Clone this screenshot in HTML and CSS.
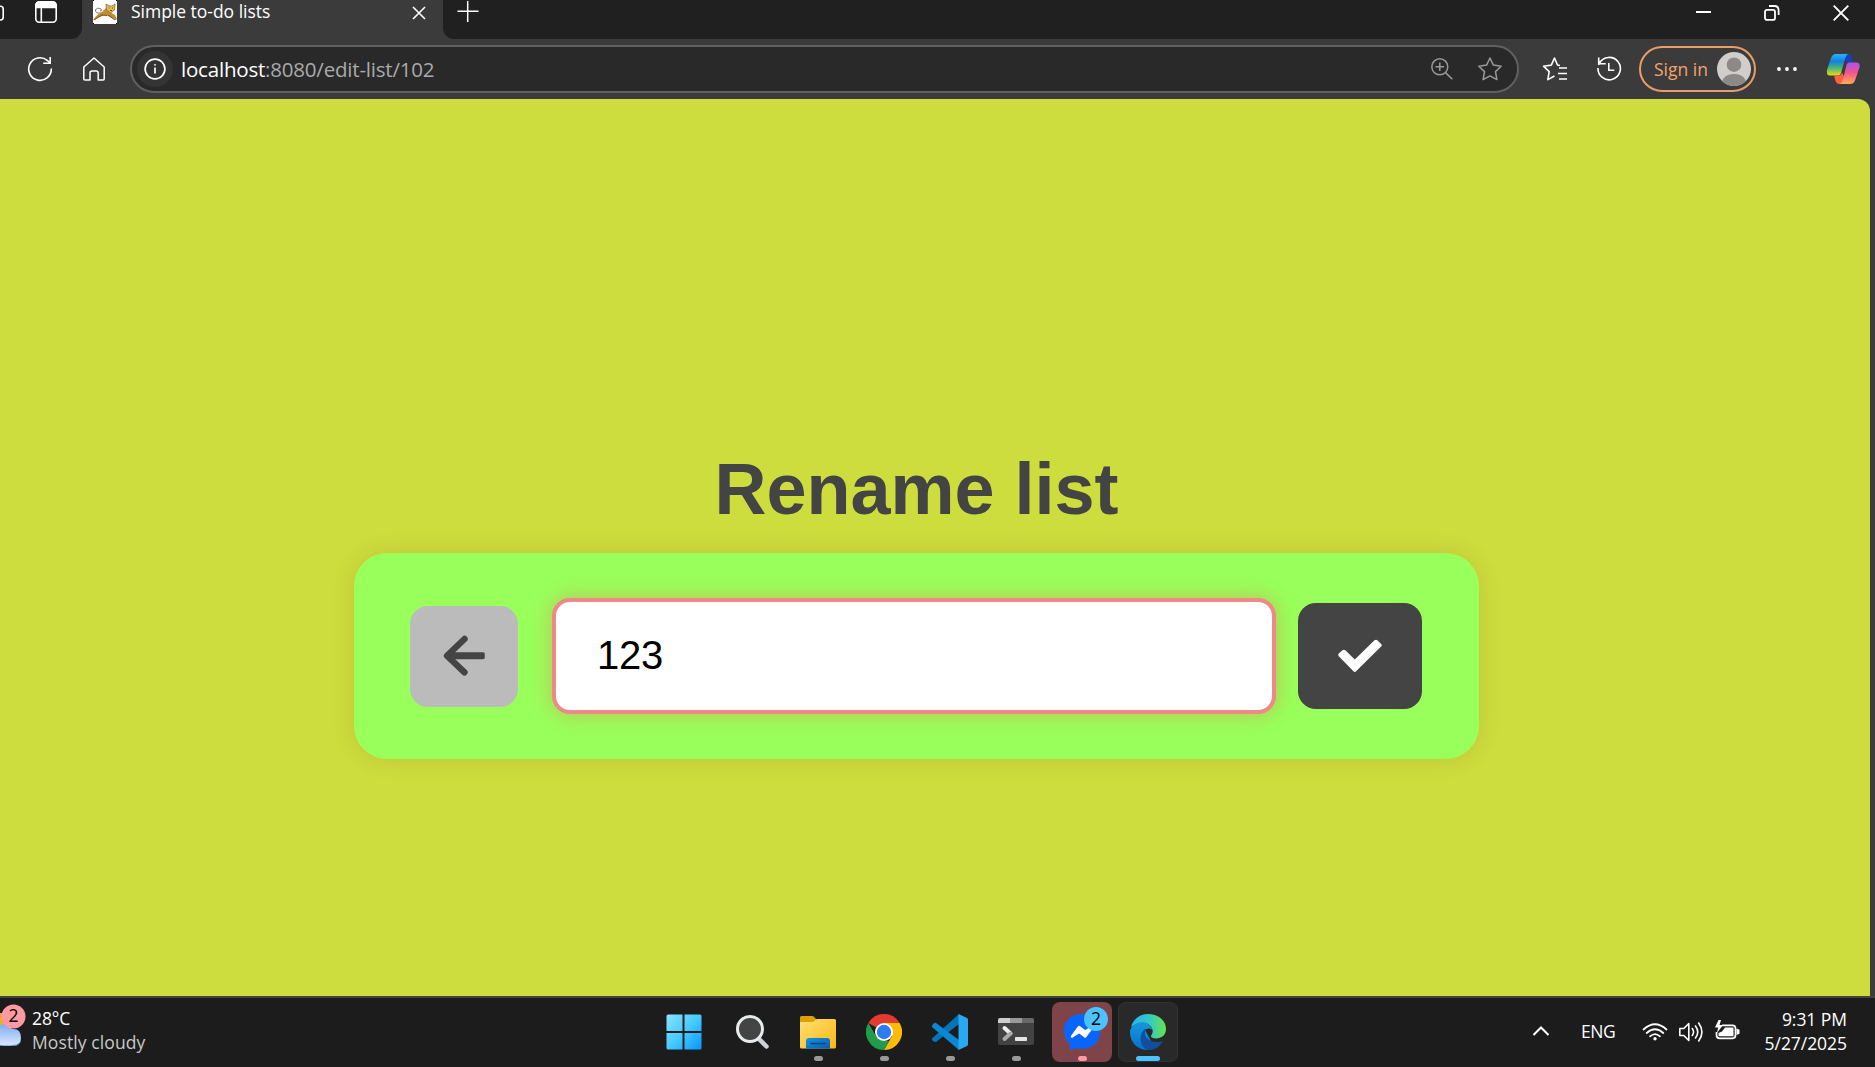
FILE: index.html
```html
<!DOCTYPE html>
<html lang="en">
<head>
<meta charset="utf-8">
<title>Simple to-do lists</title>
<link rel="stylesheet" href="styles.css">
</head>
<body>
<div class="screen">
  <header class="tabbar">
    <div class="tab-tools">
      <svg width="60" height="26" viewBox="0 0 60 26" fill="none" stroke="#fff" stroke-width="1.6"><path d="M0 6.3h.5q2.7 0 2.7 2.7v8q0 3-2.7 3H0"/><rect x="35.8" y="1.8" width="20.4" height="20.4" rx="3.5"/><path d="M41.3 8v14"/><path d="M36.5 3.5Q37.5 2 39.5 2h13q3 0 3.5 3v2.5H36z" fill="#fff"/></svg>
    </div>
    <div class="tab">
      <svg class="favicon" width="24" height="24" viewBox="0 0 24 24"><path fill="#fff" d="M0 0h24v24H0z"/><path d="M9 13Q2 14 2.500 10Q4 7 8 9Q10 11 7 11" fill="none" stroke="#777" stroke-width="1"/><path d="M0 20q4-6 9-8l4-4 4 4 5 3 2 4-1 1-5-3-6-2-6 2-5 3z" fill="#c98c2c"/><path d="M13 4l3 2h3l3-2-.5 6-4 3-4-3z" fill="#e5bd55" stroke="#8c6425" stroke-width=".8"/><path d="M15.500 8h1M19 8h1M17 10.500h2M1 20l8-5 5 .5M15 15l7 5" stroke="#544030" stroke-width=".9" fill="none"/><path d="M0 0h1v1H0zM23 0h1v1h-1zM0 23h1v1H0zM23 23h1v1h-1z"/></svg>
      <span class="tab-title">Simple to-do lists</span>
      <svg class="tab-close" width="14" height="14" viewBox="0 0 14 14" fill="none" stroke="#fff" stroke-width="1.6"><path d="M1 1l12 12M13 1L1 13"/></svg>
    </div>
    <div class="tab-rest">
      <svg width="22" height="22" viewBox="0 0 22 22" fill="none" stroke="#fff" stroke-width="1.5"><path d="M.5 11.300h21M10.700 1v21"/></svg>
      <div class="window-buttons">
        <svg width="15" height="15" viewBox="0 0 15 15"><path d="M0 6h15v2H0z" fill="#fff"/></svg>
        <svg width="16" height="16" viewBox="0 0 16 16" fill="none" stroke="#fff" stroke-width="1.8"><rect x="1" y="4.900" width="10" height="10" rx="2"/><path d="M5 1h5.500Q14.600 1 14.600 5.500V10"/></svg>
        <svg width="16" height="16" viewBox="0 0 16 16" fill="none" stroke="#fff" stroke-width="1.9"><path d="M.7.7l14.600 14.600M15.300.7L.7 15.300"/></svg>
      </div>
    </div>
  </header>
  <nav class="toolbar">
    <svg class="refresh" width="26" height="26" viewBox="0 0 26 26" fill="none" stroke="#fff" stroke-width="1.6"><path d="M24.300 12.500A11.300 11.300 0 1 1 20.200 4.300L23 6.700M23.200 1v6.300h-7"/></svg>
    <svg class="home" width="24" height="26" viewBox="0 0 24 26" fill="none" stroke="#fff" stroke-width="1.500" stroke-linejoin="round"><path d="M1.800 11L12 2l10.200 9v12q0 1-1 1h-5v-7q0-2-2-2H10q-2 0-2 2v7H3q-1.200 0-1.200-1z"/></svg>
    <div class="address">
      <span class="site-info"><svg width="22" height="22" viewBox="0 0 22 22" fill="none" stroke="#fff" stroke-width="1.700"><circle cx="11" cy="11" r="9.900"/><path d="M11 9.500v6"/><circle cx="11" cy="6.800" r=".6" fill="#fff" stroke-width=".7"/></svg></span>
      <span class="url"><b>localhost</b>:8080/edit-list/102</span>
      <svg class="zoom" width="22" height="22" viewBox="0 0 22 22" fill="none" stroke="#999" stroke-width="1.500"><circle cx="8.800" cy="8.800" r="8"/><path d="M14.600 14.600l6.700 6.700M4.500 8.800h8.600M8.800 4.500v8.600"/></svg>
      <svg class="star" width="26" height="26" viewBox="0 0 26 26" fill="none" stroke="#999" stroke-width="1.500" stroke-linejoin="round"><path d="M13 2l3.400 7.100 7.800 1.100-5.700 5.400 1.400 8-6.900-3.700-6.900 3.700 1.400-8-5.700-5.400 7.800-1.100z"/></svg>
    </div>
    <svg class="favorites" width="26" height="26" viewBox="0 0 26 26" fill="none" stroke="#fff" stroke-width="1.600" stroke-linejoin="round"><path d="M18 9.500L15.500 9 12.500 2 9.300 9.100 1.500 10.200l5.700 5.400-1.400 8L12.500 20M17 12h8M16 17.500h9M17 23h8"/></svg>
    <svg class="history" width="26" height="26" viewBox="0 0 26 26" fill="none" stroke="#fff" stroke-width="1.600"><path d="M2 12.500V12A11.200 11.200 0 1 0 3.500 7L2.500 9M2.700 1.500v6.200h7M12.800 7v7.300h5.500"/></svg>
    <div class="sign-in"><span>Sign in</span><svg width="34" height="34" viewBox="0 0 34 34"><defs><clipPath id="av"><circle cx="17" cy="17" r="17"/></clipPath></defs><g clip-path="url(#av)"><path fill="#d0cecb" d="M0 0h34v34H0z"/><circle cx="17" cy="12.700" r="7.300" fill="#8d8987"/><path d="M4 34q1-12 13-12t13 12z" fill="#8d8987"/></g></svg></div>
    <svg class="more" width="20" height="6" viewBox="0 0 20 6" fill="#fff"><circle cx="2" cy="3" r="1.900"/><circle cx="10" cy="3" r="1.900"/><circle cx="18" cy="3" r="1.900"/></svg>
    <svg class="copilot" width="34" height="32" viewBox="0 0 34 32"><defs><linearGradient id="c1" x2="0" y2="1"><stop stop-color="#25b4ff"/><stop offset=".35" stop-color="#167fe0"/><stop offset=".65" stop-color="#45b971"/><stop offset="1" stop-color="#f5d51b"/></linearGradient><linearGradient id="c2" x2="0" y2="1"><stop stop-color="#a657ef"/><stop offset=".45" stop-color="#ef5290"/><stop offset="1" stop-color="#ffad55"/></linearGradient></defs><path d="M16 1h6q2.500 0 3.200 3l1.500 5h-6z" fill="#153fc5"/><path d="M10 1h12q-2 1-3 5l-4 14q-.6 2.500-3 2.500H4Q0 22.500 1 17L5 5Q6.500 1 10 1z" fill="url(#c1)"/><path d="M8 22.500h5q2 0 3-3l4.500 9q-1 2.500-4 2.500h-3q-3 0-4-3z" fill="#fb6042"/><path d="M23 9.500h7q4.500 0 3.500 5L29 27.500Q27.500 31 24 31H13q3-.5 4-5l3.300-13Q21 9.500 23 9.500z" fill="url(#c2)"/></svg>
  </nav>
  <main class="viewport">
    <div class="page">
      <h1>Rename list</h1>
      <form class="card">
        <button type="button" class="back" aria-label="Back"><svg width="42" height="42" viewBox="0 0 42 42"><path d="M21.500 4L4 20.700 21.500 37.400" fill="none" stroke="#444" stroke-width="6.400" stroke-linecap="round" stroke-linejoin="round"/><path d="M4 17.200h36q1.800 0 1.800 1.800v3.600q0 1.700-1.800 1.700H4z" fill="#444"/></svg></button>
        <input class="name" type="text" value="123" aria-label="List name">
        <button type="button" class="save" aria-label="Save"><svg width="44" height="34" viewBox="0 0 44 34"><path d="M1 14.300L4.500 11.200Q6 10.200 7.300 11.300L16.800 20.500 36.500 1.300Q38 .2 39.300 1.200L43.100 5Q44.300 6.200 43.100 7.500L17.800 32.500Q16.800 33.300 15.700 32.500L1 17.400Q-.4 16 1 14.300z" fill="#fff"/></svg></button>
      </form>
    </div>
  </main>
  <footer class="taskbar">
    <div class="weather">
      <svg width="32" height="50" viewBox="0 0 32 50"><defs><linearGradient id="w" x2="0" y2="1"><stop stop-color="#7eabf2"/><stop offset="1" stop-color="#dceaff"/></linearGradient></defs><path d="M0 11q7 0 10 5v16H0z" fill="#f6a925"/><path d="M0 23q5-2 10 1l2 3q9-1 9 9 0 8-8 8H0z" fill="url(#w)"/><path d="M0 43q9 1 13 0 8 0 8-8 0 9-8 9H0z" fill="#4d7cdb"/><circle cx="13.500" cy="14.500" r="12" fill="#ff99a4"/><text x="13.500" y="20.300" text-anchor="middle">2</text></svg>
      <div class="weather-text"><span>28°C</span><span class="dim">Mostly cloudy</span></div>
    </div>
    <div class="apps">
      <div class="app start"><svg width="36" height="36" viewBox="0 0 36 36"><defs><linearGradient id="s" x2="1" y2="1"><stop stop-color="#8ae2ff"/><stop offset=".5" stop-color="#46cbff"/><stop offset="1" stop-color="#0795ff"/></linearGradient></defs><path fill="url(#s)" d="M.5 2q0-1.500 1.500-1.500h14.500v16.500H.5zM18.500.5H34q1.500 0 1.500 1.500v15h-17zM.5 19h16v16.500H2Q.5 35.500.5 34zM18.500 19h17v15q0 1.500-1.500 1.500H18.500z"/></svg></div>
      <div class="app"><svg width="36" height="36" viewBox="0 0 36 36"><path d="M23 23l9.500 9.500" stroke="#ccd2d9" stroke-width="4.500" stroke-linecap="round"/><circle cx="16" cy="15" r="12.500" fill="#444" stroke="#e7ebec" stroke-width="3"/></svg></div>
      <div class="app running"><svg width="36" height="36" viewBox="0 0 36 36"><defs><linearGradient id="f" x2="1" y2="1"><stop stop-color="#ffdf72"/><stop offset="1" stop-color="#fdb813"/></linearGradient><linearGradient id="fb" x2="1" y2="1"><stop stop-color="#1595dc"/><stop offset="1" stop-color="#075db3"/></linearGradient></defs><path d="M0 3.500Q0 2 1.500 2H12q2 0 3 2l1 1v6H0z" fill="#dda000"/><path d="M0 8h12q1.500 0 2.500-1.300Q15.600 5 17 5h17.500Q36 5 36 6.500V33q0 1.500-1.500 1.500h-33Q0 34.500 0 33z" fill="url(#f)"/><path d="M6 34.500V27q0-3 3-3h18q3 0 3 3v7.500z" fill="url(#fb)"/><path d="M11 29.500h14" stroke="#07427d" stroke-width="1.500" stroke-linecap="round"/></svg></div>
      <div class="app running"><svg width="36" height="36" viewBox="0 0 36 36"><path d="M18 18L2.400 9A18 18 0 0 1 33.600 9z" fill="#e33b2e"/><path d="M18 9h15.600A18 18 0 0 1 18 36L26 22z" fill="#fbbc09"/><path d="M18 36A18 18 0 0 1 2.400 9L10.200 22.500 18 27h5z" fill="#229c4b"/><circle cx="18" cy="18" r="9" fill="#fff"/><circle cx="18" cy="18" r="7.200" fill="#2f7cf0"/></svg></div>
      <div class="app running"><svg width="36" height="36" viewBox="0 0 36 36"><path d="M0 24.500L27 0v10L4 28Q2 28.500 0 26z" fill="#0874b8"/><path d="M0 11.500Q2 8 4 9l23 17v10L0 13z" fill="#0a88d2"/><path d="M26.500 0L35 4q1 .5 1 2v24q0 1.500-1 2l-8.500 4z" fill="#29a9f2"/></svg></div>
      <div class="app running"><svg width="36" height="36" viewBox="0 0 36 36"><path d="M0 6q0-2 2-2h32q2 0 2 2v23q0 2-2 2H2q-2 0-2-2z" fill="#424242"/><path d="M0 9V6q0-2 2-2h10v5z" fill="#ccc"/><path d="M12 4h12v5H12z" fill="#999"/><path d="M24 4h10q2 0 2 2v3H24z" fill="#686868"/><path d="M6.500 14l6 5.500" stroke="#eee" stroke-width="4" stroke-linecap="round"/><path d="M12.500 19.500L6.500 25" stroke="#aaa" stroke-width="4" stroke-linecap="round"/><rect x="17" y="23" width="12" height="4" rx=".8" fill="#e5e5e5"/></svg></div>
      <div class="app running alert"><svg width="60" height="60" viewBox="0 0 60 60"><path d="M30 12C19 12 12 19 12 29q0 8 6 13v5q0 1.500 2 .8l4-2q3 1 6 1c11 0 18-7 18-17.500S40 12 30 12z" fill="#0866ff"/><path d="M20 34.500l7-9.500 6 4.500 7-4-6.800 9-6-4.500z" fill="#fff" stroke="#fff" stroke-width="2.400" stroke-linejoin="round"/><circle cx="44" cy="17" r="12" fill="#4cc2ff"/><text x="44" y="22.800" text-anchor="middle">2</text></svg></div>
      <div class="app running active"><svg width="36" height="36" viewBox="0 0 36 36"><defs><linearGradient id="e1"><stop stop-color="#2ab5eb"/><stop offset=".5" stop-color="#31c7cb"/><stop offset="1" stop-color="#69e34d"/></linearGradient><linearGradient id="e2" x2="0" y2="1"><stop stop-color="#1598db"/><stop offset="1" stop-color="#0870cf"/></linearGradient></defs><path d="M1 13C3 5 10 0 18 0c10 0 18 6.500 18 15 0 6-4.500 9.500-10 9.500-4 0-6-1.500-4.500-3.500 1-1.500 1.500-3 1-5C21 8 10 6 1 13z" fill="url(#e1)"/><path d="M22.500 16C20 8 10 6 4 11Q0 14 0 18c0 11 8 18 18 18l3-9-6-11q4-3 7.500 0z" fill="url(#e2)"/><path d="M16 14.500C8 18 9 35 19 36q9 0 14-9-5 2-10 .5C15 25 13.500 20 16 14.500z" fill="#104f9d"/></svg></div>
    </div>
    <div class="tray">
      <svg class="chevron" width="18" height="12" viewBox="0 0 18 12" fill="none" stroke="#fff" stroke-width="2"><path d="M1.500 10L9 2.500l7.500 7.500"/></svg>
      <span class="lang">ENG</span>
      <svg class="wifi" width="26" height="20" viewBox="0 0 26 20" fill="none" stroke="#fff" stroke-width="1.700" stroke-linecap="round"><path d="M1.500 7.500q11.500-10.500 23 0M4.700 11q8.300-7.500 16.600 0M8 14.300q5-4.500 10 0"/><circle cx="13" cy="16.700" r="1.700" fill="#fff" stroke="none"/></svg>
      <svg class="volume" width="26" height="22" viewBox="0 0 26 22" fill="none" stroke="#fff" stroke-width="1.600" stroke-linejoin="round" stroke-linecap="round"><path d="M1.800 7.500h4l5-5v17l-5-5h-4zM14.300 7.500q2.500 3.500 0 7M17.500 5q4.500 6 0 12M20.700 2q6.500 9 0 18"/></svg>
      <svg class="battery" width="26" height="22" viewBox="0 0 26 22"><path d="M8 6.300h10.500q3 0 3 3v7q0 3-3 3h-13q-3 0-3-3V13" fill="none" stroke="#fff" stroke-width="1.700"/><path d="M11 8.500h8.500v8.800h-15V14L8 12.500zM22.500 9.500l3 1.200v4l-3 1.200z" fill="#fff"/><path d="M4.500 1L1 8.500h3.200L3 14l6-8H5.500L7 1z" fill="#fff"/></svg>
      <div class="clock"><span>9:31 PM</span><span class="date">5/27/2025</span></div>
    </div>
  </footer>
</div>
</body>
</html>
```
FILE: styles.css
```css
* { box-sizing: border-box; }
body { margin: 0; background: #3b3b3b; font-family: "Open Sans", "Noto Sans", sans-serif; color: #fff; }
svg { display: block; flex: none; }
.screen { width: 1875px; height: 1067px; display: flex; flex-direction: column; overflow: hidden; }

.tabbar { height: 39px; display: flex; background: #3b3b3b; }
.tab-tools { width: 82px; background: #202020; border-bottom-right-radius: 11px; }
.tab { width: 361px; display: flex; align-items: flex-start; padding: 0 17px 0 11px; }
.tab-title { margin-left: 14px; font-size: 17.5px; line-height: 22px; letter-spacing: -0.02px; white-space: nowrap; }
.tab-close { margin: 6px 0 0 auto; }
.tab-rest { flex: 1; display: flex; justify-content: space-between; padding: 0 26px 0 14px; background: #202020; border-bottom-left-radius: 11px; }
.window-buttons { display: flex; gap: 53px; padding-top: 5px; }

.toolbar { height: 60px; display: flex; align-items: center; padding: 0 15px 0 27px; }
.home { margin-left: 29px; }
.address { width: 1389px; height: 48px; margin-left: 24px; display: flex; align-items: center; padding: 0 14px 0 5px; background: #292929; border: 2px solid #606060; border-radius: 24px; }
.site-info { width: 36px; height: 36px; display: grid; place-items: center; border-radius: 50%; background: #343434; }
.url { margin-left: 8px; font-size: 20.5px; line-height: 28px; color: #aaa; white-space: nowrap; letter-spacing: -0.2px; }
.url b { font-weight: 400; color: #fff; }
.zoom { margin-left: auto; }
.star { margin-left: 24px; }
.favorites { margin-left: 23px; }
.history { margin-left: 28px; }
.sign-in { width: 117px; height: 46px; margin-left: 17px; display: flex; align-items: center; justify-content: space-between; padding: 0 3px 0 13px; border: 2px solid #e99d68; border-radius: 23px; color: #f3a46b; font-size: 17.5px; line-height: 24px; white-space: nowrap; }
.sign-in span { padding-bottom: 1px; }
.more { margin-left: 21px; }
.copilot { margin-left: auto; }

.viewport { height: 897px; padding-right: 5px; }
.page { height: 897px; display: flex; flex-direction: column; align-items: center; padding: 349px 37px 0 0; background: #ccdd3d; border-top-right-radius: 12px; }
h1 { margin: 0 0 23px; font: bold 72px/82px "Liberation Sans", Arial, sans-serif; color: #444; white-space: nowrap; }
.card { width: 1125px; height: 206px; display: flex; align-items: center; padding: 0 57px 0 56px; background: #99ff5a; border-radius: 33px; box-shadow: 0 0 22px rgba(150, 68, 30, .16); }
button { display: grid; place-items: center; padding: 0; border: 0; border-radius: 18px; }
.back { width: 108px; height: 101px; background: #bbb; }
.name { width: 724px; height: 116px; margin: 0 22px 0 34px; padding: 0 41px 2px; border: 4px solid #f08888; border-radius: 18px; outline: 0; background: #fff; box-shadow: 0 0 20px rgba(240, 100, 100, .42); font: 40px "Liberation Sans", Arial, sans-serif; letter-spacing: -0.3px; color: #000; }
.save { width: 124px; height: 106px; background: #444; }

.taskbar { height: 71px; display: grid; grid-template-columns: 656px 522px 1fr; background: #1c1c1c; border-top: 2px solid #424242; font-size: 17.5px; line-height: 24px; }
.taskbar text { font: 17.5px "Open Sans", sans-serif; fill: #000; }
.weather { display: flex; padding-top: 4px; }
.weather-text { display: flex; flex-direction: column; padding-top: 4px; }
.weather-text span { letter-spacing: -0.1px; }
.weather-text .dim { color: #c8c8c8; letter-spacing: 0.1px; }
.apps { display: flex; gap: 6px; padding-top: 4px; }
.app { position: relative; width: 60px; height: 60px; display: grid; place-items: center; border-radius: 8px; }
.start { padding-right: 4px; }
.running::after { content: ""; position: absolute; left: 26px; bottom: 1px; width: 9px; height: 5px; border-radius: 3px; background: #999; }
.alert { background: #7f444a; }
.alert::after { background: #ff99a4; }
.active { background: #292929; border: 1px solid #333; }
.active::after { left: 17px; bottom: 0; width: 24px; background: #4cc2ff; }
.tray { display: flex; align-items: center; padding-right: 28px; }
.chevron { margin: 0 0 3px 354px; }
.lang { width: 35px; margin-left: 31px; padding-bottom: 3px; letter-spacing: -0.4px; }
.wifi { margin-left: 26px; margin-bottom: 2px; }
.volume { margin-left: 10px; margin-bottom: 2px; }
.battery { margin: 0 0 6px 10px; }
.clock { margin-left: auto; display: flex; flex-direction: column; align-items: flex-end; padding-bottom: 4px; white-space: nowrap; letter-spacing: -0.05px; }
```
